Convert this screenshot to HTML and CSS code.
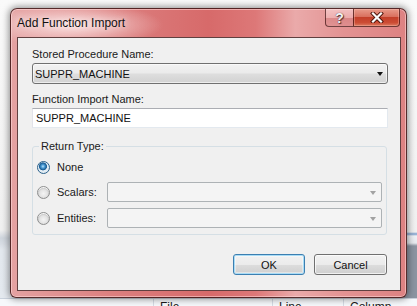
FILE: index.html
```
<!doctype html>
<html lang="en-US">
    <head>
        <meta charset="utf-8">
        <meta name="viewport" content="width=device-width, initial-scale=1">
        <title>Add Function Import</title>
        <link rel="stylesheet" href="styles.css">
    </head>
    <body>
        <div class="desktop">
            <div class="desk-area">
                <div class="desk-left"></div>
                <div class="desk-right"></div>
            </div>
            <div class="list-head">
                <span class="col col-blank"></span>
                <span class="col col-file">File</span>
                <span class="col col-line">Line</span>
                <span class="col col-column">Column</span>
            </div>

            <div class="window">
                <div class="titlebar">
                    <span class="title">Add Function Import</span>
                    <div class="caption-buttons">
                        <span class="cap-btn help">?</span>
                        <span class="cap-btn close">
                            <svg width="14" height="11" viewBox="0 0 14 11">
                                <path d="M3 1.5 L11 9.5 M11 1.5 L3 9.5" stroke="#4a1208" stroke-width="4" stroke-linecap="square" fill="none"/>
                                <path d="M3 1.5 L11 9.5 M11 1.5 L3 9.5" stroke="#fbfbfb" stroke-width="2.2" stroke-linecap="square" fill="none"/>
                            </svg>
                        </span>
                    </div>
                </div>

                <div class="client">
                    <label class="field-label" for="proc">Stored Procedure Name:</label>
                    <div class="combo" id="proc">
                        <span>SUPPR_MACHINE</span>
                        <span class="arrow"></span>
                    </div>

                    <label class="field-label second" for="import-name">Function Import Name:</label>
                    <div class="textbox" id="import-name">SUPPR_MACHINE</div>

                    <fieldset class="group">
                        <legend>Return Type:</legend>
                        <div class="radio-row first">
                            <span class="radio checked"></span>
                            <span class="radio-label">None</span>
                        </div>
                        <div class="radio-row">
                            <span class="radio"></span>
                            <span class="radio-label">Scalars:</span>
                            <div class="combo disabled"><span></span><span class="arrow"></span></div>
                        </div>
                        <div class="radio-row">
                            <span class="radio"></span>
                            <span class="radio-label">Entities:</span>
                            <div class="combo disabled"><span></span><span class="arrow"></span></div>
                        </div>
                    </fieldset>

                    <div class="buttons">
                        <button class="btn default">OK</button>
                        <button class="btn">Cancel</button>
                    </div>
                </div>
            </div>
        </div>
    </body>
</html>
```

FILE: styles.css
```
* {
    margin: 0;
    padding: 0;
    box-sizing: border-box;
}

body {
    font-family: 'Liberation Sans', Arial, sans-serif;
    font-size: 11px;
    color: #000;
    background: #f4f4f4;
}

.desktop {
    position: relative;
    width: 417px;
    height: 306px;
    overflow: hidden;
    display: flex;
    flex-direction: column;
}

.desk-area {
    height: 298px;
    display: flex;
}

.desk-left {
    width: 153px;
    background: linear-gradient(to bottom, #fafafa 0, #f0f0f0 230px, #cfd5dd 238px, #d8dde4 244px, #e3e8ee 250px, #e4e9ef 298px);
}

.desk-right {
    flex: 1;
    background: linear-gradient(to bottom, #fafafa 0, #f0f0f0 232px, #7d9fcb 234px, #eef1f5 236px, #e6e9ee 243px, #8b94a1 246px, #8b94a1 298px);
}

.list-head {
    height: 8px;
    display: flex;
    background: #f6f8fb;
    border-top: 1px solid #c9d1dc;
    font-size: 12px;
    line-height: 16px;
    color: #1a1a1a;
}

.col {
    padding-left: 6px;
    border-left: 1px solid #d5dbe4;
}

.col-blank {
    width: 153px;
    border-left: 0;
}

.col-file {
    width: 119px;
}

.col-line {
    width: 71px;
}

.col-column {
    flex: 1;
}

/* dialog window */
.window {
    position: absolute;
    left: 10px;
    top: 8px;
    width: 397px;
    height: 290px;
    display: flex;
    flex-direction: column;
    padding: 0 5px 6px 6px;
    border: 1px solid rgba(50, 15, 15, 0.8);
    border-radius: 7px 7px 6px 6px;
    background:
        radial-gradient(ellipse 90px 22px at 62px 16px, rgba(255, 240, 240, 0.85), rgba(255, 240, 240, 0) 100%),
        linear-gradient(to right, #e4a2a2 0, #dc8080 25%, #d76a6a 50%, #dd7878 62%, #eaaaaa 72%, #e39393 84%, #dd8282 100%);
    box-shadow: 0 0 7px 1px rgba(0, 0, 0, 0.45), inset 0 0 0 1px rgba(255, 220, 220, 0.55);
}

.titlebar {
    height: 28px;
    display: flex;
    justify-content: space-between;
    align-items: flex-start;
}

.title {
    padding-top: 7px;
    font-size: 12px;
    line-height: 14px;
    color: #111;
    text-shadow: 0 0 6px rgba(255, 255, 255, 0.9);
}

.caption-buttons {
    display: flex;
    margin-right: 1px;
}

.cap-btn {
    height: 18px;
    display: flex;
    align-items: center;
    justify-content: center;
    border: 1px solid rgba(70, 25, 25, 0.75);
    border-top: 0;
}

.help {
    width: 28px;
    border-radius: 0 0 0 4px;
    border-right: 0;
    background: linear-gradient(to bottom, rgba(255, 230, 230, 0.55) 0, rgba(255, 220, 220, 0.35) 50%, rgba(200, 110, 110, 0.35) 51%, rgba(220, 140, 140, 0.4) 100%);
    font-size: 14px;
    font-weight: bold;
    color: #f3f3f3;
    text-shadow: 0 0 1px #3c2020, 1px 1px 1px #5a3030;
}

.close {
    width: 47px;
    border-radius: 0 0 4px 0;
    background: linear-gradient(to bottom, #e89a8a 0, #d9705e 45%, #c3402a 50%, #cc4c34 80%, #dc7a60 100%);
    box-shadow: inset 0 0 0 1px rgba(255, 200, 190, 0.35);
}

/* client area */
.client {
    flex: 1;
    display: flex;
    flex-direction: column;
    padding: 9px 12px 0 14px;
    background: #f0f0f0;
    border: 1px solid rgba(60, 20, 20, 0.8);
}

.field-label {
    display: block;
    line-height: 15px;
    color: #1a1a1a;
    margin-bottom: 1px;
}

.field-label.second {
    margin-top: 8px;
}

.combo {
    height: 21px;
    display: flex;
    align-items: center;
    justify-content: space-between;
    padding: 0 4px 0 2px;
    border: 1px solid #707070;
    border-radius: 3px;
    background: linear-gradient(to bottom, #f2f2f2 0, #ebebeb 45%, #dddddd 55%, #d2d2d2 100%);
    box-shadow: inset 0 0 0 1px rgba(255, 255, 255, 0.6);
    color: #111;
}

.arrow {
    width: 0;
    height: 0;
    border-left: 3.5px solid transparent;
    border-right: 3.5px solid transparent;
    border-top: 4px solid #111;
    margin-top: 1px;
}

.combo.disabled {
    flex: 1;
    height: 20px;
    border-color: #adb2b5;
    border-radius: 2px;
    background: #f4f4f4;
    box-shadow: none;
    padding-right: 5px;
}

.combo.disabled .arrow {
    border-top-color: #a2a2a2;
}

.textbox {
    height: 20px;
    line-height: 18px;
    padding-left: 3px;
    background: #fff;
    border: 1px solid #abadb3;
    border-color: #abadb3 #e3e9ef #e3e9ef #e2e3ea;
    color: #111;
}

/* return type group */
.group {
    margin: 11px 1px 0 0;
    padding: 3px 4px 6px 4px;
    border: 1px solid #d5dfe5;
    border-radius: 3px;
    display: flex;
    flex-direction: column;
    gap: 6px;
}

.group legend {
    margin-left: 2px;
    padding: 0 2px;
    line-height: 15px;
    color: #1a1a1a;
}

.radio-row {
    height: 20px;
    display: flex;
    align-items: center;
}

.radio-row.first {
    margin-bottom: -1px;
}

.radio {
    flex: none;
    width: 13px;
    height: 13px;
    margin-right: 7px;
    border-radius: 50%;
    border: 1px solid #8e8f8f;
    background: radial-gradient(circle at 50% 60%, #f4f4f4 0, #e3e3e3 45%, #cfcfcf 62%, #f6f6f6 70%, #f6f6f6 100%);
}

.radio.checked {
    border-color: #2c628b;
    background: radial-gradient(circle at 45% 40%, #bfe3fa 0, #4fa0d8 18%, #1d5f96 38%, #2a6aa0 42%, #e4eef5 48%, #dfe7ee 100%);
}

.radio-label {
    width: 50px;
    color: #1a1a1a;
}

.buttons {
    display: flex;
    justify-content: flex-end;
    gap: 9px;
    margin-top: 19px;
    margin-right: 1px;
}

.btn {
    width: 73px;
    height: 21px;
    font-family: 'Liberation Sans', Arial, sans-serif;
    font-size: 11px;
    color: #111;
    border: 1px solid #707070;
    border-radius: 3px;
    background: linear-gradient(to bottom, #f2f2f2 0, #ebebeb 50%, #dddddd 50%, #cfcfcf 100%);
    box-shadow: inset 0 0 0 1px rgba(255, 255, 255, 0.7);
}

.btn.default {
    width: 72px;
    border-color: #3c7fb1;
    box-shadow: inset 0 0 0 1px #a9dcf6, inset 0 0 0 2px rgba(255, 255, 255, 0.4);
}
```
